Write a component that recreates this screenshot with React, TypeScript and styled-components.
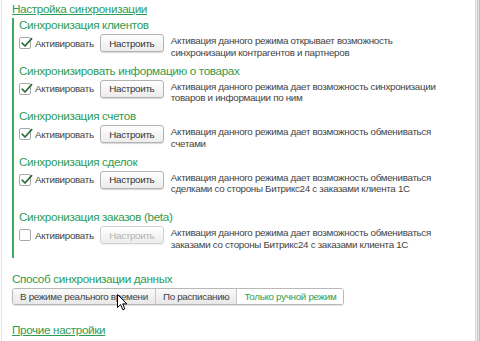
import styled, { createGlobalStyle } from 'styled-components';

const GlobalStyle = createGlobalStyle`
  html, body {
    margin: 0;
    padding: 0;
    background: #fff;
  }
  body {
    font-family: 'Liberation Sans', Arial, sans-serif;
  }
`;

const green = '#2f9c52';
const rule = '#3cad60';

type Sync = {
  title: string;
  checked: boolean;
  lines: string[];
  spaced?: boolean;
};

const syncs: Sync[] = [
  {
    title: 'Синхронизация клиентов',
    checked: true,
    lines: [
      'Активация данного режима открывает возможность',
      'синхронизации контрагентов и партнеров',
    ],
  },
  {
    title: 'Синхронизировать информацию о товарах',
    checked: true,
    lines: [
      'Активация данного режима дает возможность синхронизации',
      'товаров и информации по ним',
    ],
  },
  {
    title: 'Синхронизация счетов',
    checked: true,
    lines: ['Активация данного режима дает возможность обмениваться', 'счетами'],
  },
  {
    title: 'Синхронизация сделок',
    checked: true,
    lines: [
      'Активация данного режима дает возможность обмениваться',
      'сделками со стороны Битрикс24 с заказами клиента 1С',
    ],
  },
  {
    title: 'Синхронизация заказов (beta)',
    checked: false,
    spaced: true,
    lines: [
      'Активация данного режима дает возможность обмениваться',
      'заказами со стороны Битрикс24 с заказами клиента 1С',
    ],
  },
];

const modes = ['В режиме реального времени', 'По расписанию', 'Только ручной режим'];

const Window = styled.div`
  position: relative;
  display: flex;
  width: 480px;
  height: 341px;
  overflow: hidden;
  background: #fff;
`;

const Content = styled.div`
  flex: 1;
  margin-left: 1px;
  border-left: 1px solid #e4e4e4;
  padding: 2px 0 0 10px;
`;

const ScrollRail = styled.div`
  width: 5px;
  background: linear-gradient(
    to right,
    #d6d6d6 0 1px,
    #f3f3f3 1px 2px,
    #c9c9c9 2px 3px,
    #e2e2e2 3px 4px,
    #bdbdbd 4px 5px
  );
`;

const HeadLink = styled.a`
  display: block;
  font-size: 11.7px;
  letter-spacing: -0.35px;
  line-height: 14px;
  color: ${green};
  text-decoration: underline;
  cursor: pointer;
`;

const Group = styled.div`
  margin-top: 2px;
  border-left: 2px solid ${rule};
  padding: 0 0 8px 5px;
`;

const Section = styled.div<{ $spaced?: boolean }>`
  margin-top: ${(p) => (p.$spaced ? '15.5px' : '5.5px')};

  &:first-child {
    margin-top: 0;
  }
`;

const Title = styled.div`
  font-size: 11.7px;
  letter-spacing: -0.35px;
  line-height: 14px;
  color: ${green};
`;

const Row = styled.div`
  display: flex;
  align-items: flex-start;
  margin-top: 2px;
`;

const CheckLabel = styled.label`
  display: flex;
  align-items: center;
  gap: 4px;
  height: 18px;
  font-size: 9.8px;
  letter-spacing: -0.3px;
  color: #444;
`;

const Box = styled.span`
  position: relative;
  box-sizing: border-box;
  width: 12px;
  height: 12px;
  border: 1px solid #a9a9a9;
  border-radius: 2px;
  background: #fff;

  svg {
    position: absolute;
    left: 0;
    top: -2px;
  }
`;

const Button = styled.button<{ disabled?: boolean }>`
  box-sizing: border-box;
  width: 64px;
  height: 18px;
  margin-left: 6px;
  padding: 0;
  border: 1px solid ${(p) => (p.disabled ? '#d2d2d2' : '#b4b4b4')};
  border-radius: 3px;
  background: linear-gradient(#ffffff, #ececec);
  box-shadow: 0 1px 1px rgba(0, 0, 0, ${(p) => (p.disabled ? 0.06 : 0.16)});
  font-family: inherit;
  font-size: 9.8px;
  letter-spacing: -0.3px;
  color: ${(p) => (p.disabled ? '#b3b3b3' : '#333')};
`;

const Desc = styled.div`
  margin-left: 7px;
  padding-top: 1px;
  font-size: 9.8px;
  letter-spacing: -0.3px;
  line-height: 11.5px;
  color: #444;
  white-space: nowrap;
`;

const Caption = styled.div`
  margin-top: 14px;
  font-size: 11.7px;
  letter-spacing: -0.35px;
  line-height: 14px;
  color: ${green};
`;

const Segmented = styled.div`
  display: inline-flex;
  margin-top: 2px;
  height: 17px;
  box-sizing: border-box;
  border: 1px solid #b8b8b8;
  border-radius: 3px;
  overflow: hidden;
  box-shadow: 0 1px 1px rgba(0, 0, 0, 0.12);
`;

const Segment = styled.div<{ $active?: boolean }>`
  padding: 0 7px;
  font-size: 9.8px;
  letter-spacing: -0.3px;
  line-height: 15px;
  white-space: nowrap;
  color: ${(p) => (p.$active ? green : '#444')};
  background: ${(p) => (p.$active ? '#fff' : 'linear-gradient(#fafafa, #e8e8e8)')};

  & + & {
    border-left: 1px solid #c6c6c6;
  }
`;

const FootLink = styled(HeadLink)`
  margin-top: 18px;
`;

const Pointer = styled.svg`
  position: absolute;
  left: 117px;
  top: 294px;
`;

const Check = () => (
  <svg width="14" height="14" viewBox="0 0 14 14">
    <path
      d="M2.2 7.2 L5 10 L11.6 2.6"
      fill="none"
      stroke="#2d6b38"
      strokeWidth="1.7"
      strokeLinecap="round"
      strokeLinejoin="round"
    />
  </svg>
);

export default function App() {
  return (
    <Window>
      <GlobalStyle />
      <Content>
        <HeadLink>Настройка синхронизации</HeadLink>
        <Group>
          {syncs.map((s) => (
            <Section key={s.title} $spaced={s.spaced}>
              <Title>{s.title}</Title>
              <Row>
                <CheckLabel>
                  <Box>{s.checked && <Check />}</Box>
                  Активировать
                </CheckLabel>
                <Button disabled={!s.checked}>Настроить</Button>
                <Desc>
                  {s.lines.map((l) => (
                    <div key={l}>{l}</div>
                  ))}
                </Desc>
              </Row>
            </Section>
          ))}
        </Group>
        <Caption>Способ синхронизации данных</Caption>
        <Segmented>
          {modes.map((m, i) => (
            <Segment key={m} $active={i === 2}>
              {m}
            </Segment>
          ))}
        </Segmented>
        <FootLink>Прочие настройки</FootLink>
      </Content>
      <ScrollRail />
      <Pointer width="12" height="18" viewBox="0 0 12 18">
        <path
          d="M0.5 0.5 L0.5 13.5 L3.6 10.6 L5.8 15.8 L7.8 14.9 L5.7 9.9 L9.9 9.9 Z"
          fill="#fff"
          stroke="#000"
          strokeWidth="1"
          strokeLinejoin="round"
        />
      </Pointer>
    </Window>
  );
}
